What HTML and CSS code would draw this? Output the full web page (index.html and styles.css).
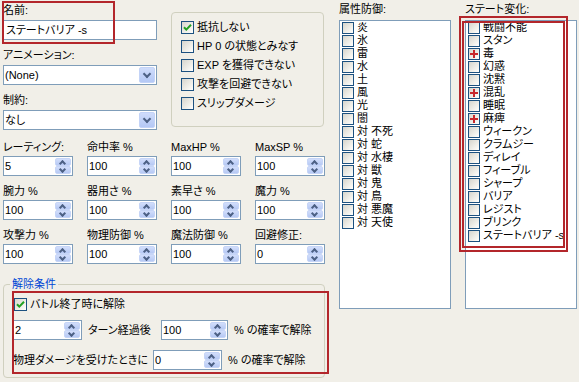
FILE: index.html
```html
<!DOCTYPE html>
<html lang="ja">
<head>
<meta charset="utf-8">
<link rel="stylesheet" href="styles.css">
</head>
<body>
<div class="page">
  <div class="left">
    <div class="top">
      <div class="col-a">
        <div class="field">
          <div class="lbl">名前:</div>
          <div class="text">ステートバリア -s</div>
          <div class="mark mark-name"></div>
        </div>
        <div class="field">
          <div class="lbl">アニメーション:</div>
          <div class="combo"><span>(None)</span><span class="drop"></span></div>
        </div>
        <div class="field">
          <div class="lbl">制約:</div>
          <div class="combo"><span>なし</span><span class="drop"></span></div>
        </div>
      </div>
      <div class="opts">
        <div class="opt"><span class="cb"><svg viewBox="0 0 11 11" width="11" height="11"><path d="M2 5.2 L4.3 7.6 L9 2.8" stroke="#21a121" stroke-width="2" fill="none"/></svg></span>抵抗しない</div>
        <div class="opt"><span class="cb"></span>HP 0 の状態とみなす</div>
        <div class="opt"><span class="cb"></span>EXP を獲得できない</div>
        <div class="opt"><span class="cb"></span>攻撃を回避できない</div>
        <div class="opt"><span class="cb"></span>スリップダメージ</div>
      </div>
    </div>

    <div class="grid">
      <div class="cell"><div class="lbl">レーティング:</div><div class="spin"><span class="v">5</span><span class="b"><span class="up"></span><span class="dn"></span></span></div></div>
      <div class="cell"><div class="lbl">命中率 %</div><div class="spin"><span class="v">100</span><span class="b"><span class="up"></span><span class="dn"></span></span></div></div>
      <div class="cell"><div class="lbl">MaxHP %</div><div class="spin"><span class="v">100</span><span class="b"><span class="up"></span><span class="dn"></span></span></div></div>
      <div class="cell"><div class="lbl">MaxSP %</div><div class="spin"><span class="v">100</span><span class="b"><span class="up"></span><span class="dn"></span></span></div></div>
      <div class="cell"><div class="lbl">腕力 %</div><div class="spin"><span class="v">100</span><span class="b"><span class="up"></span><span class="dn"></span></span></div></div>
      <div class="cell"><div class="lbl">器用さ %</div><div class="spin"><span class="v">100</span><span class="b"><span class="up"></span><span class="dn"></span></span></div></div>
      <div class="cell"><div class="lbl">素早さ %</div><div class="spin"><span class="v">100</span><span class="b"><span class="up"></span><span class="dn"></span></span></div></div>
      <div class="cell"><div class="lbl">魔力 %</div><div class="spin"><span class="v">100</span><span class="b"><span class="up"></span><span class="dn"></span></span></div></div>
      <div class="cell"><div class="lbl">攻撃力 %</div><div class="spin"><span class="v">100</span><span class="b"><span class="up"></span><span class="dn"></span></span></div></div>
      <div class="cell"><div class="lbl">物理防御 %</div><div class="spin"><span class="v">100</span><span class="b"><span class="up"></span><span class="dn"></span></span></div></div>
      <div class="cell"><div class="lbl">魔法防御 %</div><div class="spin"><span class="v">100</span><span class="b"><span class="up"></span><span class="dn"></span></span></div></div>
      <div class="cell"><div class="lbl">回避修正:</div><div class="spin"><span class="v">0</span><span class="b"><span class="up"></span><span class="dn"></span></span></div></div>
    </div>

    <div class="release-wrap">
      <fieldset class="release">
        <legend>解除条件</legend>
        <div class="rrow r1"><span class="cb"><svg viewBox="0 0 11 11" width="11" height="11"><path d="M2 5.2 L4.3 7.6 L9 2.8" stroke="#21a121" stroke-width="2" fill="none"/></svg></span>バトル終了時に解除</div>
        <div class="rrow r2">
          <div class="spin w69"><span class="v">2</span><span class="b"><span class="up"></span><span class="dn"></span></span></div>
          <span class="rl turn">ターン経過後</span>
          <div class="spin w67"><span class="v">100</span><span class="b"><span class="up"></span><span class="dn"></span></span></div>
          <span class="rl">% の確率で解除</span>
        </div>
        <div class="rrow r3">
          <span class="rl dmg">物理ダメージを受けたときに</span>
          <div class="spin w69"><span class="v">0</span><span class="b"><span class="up"></span><span class="dn"></span></span></div>
          <span class="rl">% の確率で解除</span>
        </div>
      </fieldset>
      <div class="mark mark-rel"></div>
    </div>
  </div>

  <div class="lists">
    <div class="lcol">
      <div class="lbl">属性防御:</div>
      <div class="list">
        <div class="item"><span class="cb sm"></span>炎</div>
        <div class="item"><span class="cb sm"></span>氷</div>
        <div class="item"><span class="cb sm"></span>雷</div>
        <div class="item"><span class="cb sm"></span>水</div>
        <div class="item"><span class="cb sm"></span>土</div>
        <div class="item"><span class="cb sm"></span>風</div>
        <div class="item"><span class="cb sm"></span>光</div>
        <div class="item"><span class="cb sm"></span>闇</div>
        <div class="item"><span class="cb sm"></span>対 不死</div>
        <div class="item"><span class="cb sm"></span>対 蛇</div>
        <div class="item"><span class="cb sm"></span>対 水棲</div>
        <div class="item"><span class="cb sm"></span>対 獣</div>
        <div class="item"><span class="cb sm"></span>対 鬼</div>
        <div class="item"><span class="cb sm"></span>対 鳥</div>
        <div class="item"><span class="cb sm"></span>対 悪魔</div>
        <div class="item"><span class="cb sm"></span>対 天使</div>
      </div>
    </div>
    <div class="lcol state">
      <div class="lbl">ステート変化:</div>
      <div class="list">
        <div class="item"><span class="cb sm"></span>戦闘不能</div>
        <div class="item"><span class="cb sm"></span>スタン</div>
        <div class="item"><span class="cb sm plus"></span>毒</div>
        <div class="item"><span class="cb sm"></span>幻惑</div>
        <div class="item"><span class="cb sm"></span>沈黙</div>
        <div class="item"><span class="cb sm plus"></span>混乱</div>
        <div class="item"><span class="cb sm"></span>睡眠</div>
        <div class="item"><span class="cb sm plus"></span>麻痺</div>
        <div class="item"><span class="cb sm"></span>ウィークン</div>
        <div class="item"><span class="cb sm"></span>クラムジー</div>
        <div class="item"><span class="cb sm"></span>ディレイ</div>
        <div class="item"><span class="cb sm"></span>フィーブル</div>
        <div class="item"><span class="cb sm"></span>シャープ</div>
        <div class="item"><span class="cb sm"></span>バリア</div>
        <div class="item"><span class="cb sm"></span>レジスト</div>
        <div class="item"><span class="cb sm"></span>ブリンク</div>
        <div class="item"><span class="cb sm"></span>ステートバリア -s</div>
      </div>
      <div class="mark mark-st1"></div>
      <div class="mark mark-st2"></div>
    </div>
  </div>
</div>
</body>
</html>
```

FILE: styles.css
```css
* { box-sizing: border-box; }
html, body { margin: 0; padding: 0; }
body {
  width: 579px;
  height: 382px;
  overflow: hidden;
  background: #f1efe8;
  color: #000;
  font: 11px/13px "Liberation Sans", "Noto Sans CJK JP", sans-serif;
  font-feature-settings: "palt";
}
.page { display: flex; padding-left: 3px; }
.left { width: 322px; }
.top { display: flex; gap: 14px; }

.col-a { width: 154px; padding-top: 4px; display: flex; flex-direction: column; gap: 9px; }
.field { display: flex; flex-direction: column; gap: 3px; position: relative; }
.lbl { height: 13px; white-space: nowrap; }

.text, .combo {
  height: 20px;
  border: 1px solid #7f9db9;
  background: #fff;
  display: flex;
  align-items: center;
  white-space: nowrap;
}
.text { padding-left: 2px; }
.combo { padding-left: 1px; justify-content: space-between; }
.drop {
  width: 16px; height: 16px;
  margin-right: 1px;
  border: 1px solid #c3d3f7;
  border-radius: 2px;
  background: linear-gradient(#cfdcfb, #b4c8f5);
  position: relative;
}
.drop::before {
  content: "";
  position: absolute;
  left: 4px; top: 3px;
  width: 4px; height: 4px;
  border-right: 2px solid #4d6185;
  border-bottom: 2px solid #4d6185;
  transform: rotate(45deg);
}

.opts {
  width: 153px;
  height: 115px;
  margin-top: 12px;
  border: 1px solid #d0d0bf;
  border-radius: 4px;
  padding: 5px 0 0 9px;
}
.opt { height: 19px; display: flex; align-items: center; gap: 3px; white-space: nowrap; }

.cb {
  flex: none;
  width: 13px; height: 13px;
  border: 1px solid #1c5180;
  background: linear-gradient(135deg, #d6d5cd, #f4f3ee 70%, #fff);
  display: flex; align-items: center; justify-content: center;
  position: relative;
}
.cb.sm { width: 12px; height: 12px; }
.cb.plus::before, .cb.plus::after {
  content: "";
  position: absolute;
  background: #c8282d;
}
.cb.plus::before { left: 1px; top: 4px; width: 8px; height: 2px; }
.cb.plus::after { left: 4px; top: 1px; width: 2px; height: 8px; }

.grid {
  display: grid;
  grid-template-columns: repeat(4, 70px);
  column-gap: 14px;
  row-gap: 9px;
  margin-top: 11px;
}
.cell { display: flex; flex-direction: column; gap: 2px; }

.spin {
  height: 20px;
  border: 1px solid #7f9db9;
  background: #fff;
  display: flex;
  flex: none;
}
.spin .v { flex: 1; padding-left: 1px; line-height: 18px; }
.spin .b { width: 16px; margin: 1px 1px 1px 0; display: flex; flex-direction: column; }
.spin .b span {
  flex: 1;
  position: relative;
  border: 1px solid #c6d5f7;
  border-radius: 2px;
  background: linear-gradient(#d2defb, #b6c9f4);
}
.spin .b span::before {
  content: "";
  position: absolute;
  left: 4px;
  width: 3px; height: 3px;
  border-left: 2px solid #4d6185;
  border-top: 2px solid #4d6185;
}
.spin .b .up::before { top: 2px; transform: rotate(45deg); }
.spin .b .dn::before { top: 0; transform: rotate(225deg); }
.w69 { width: 69px; }
.w67 { width: 67px; }

.release-wrap { position: relative; margin-top: 14px; }
.release {
  margin: 0;
  width: 322px;
  height: 100px;
  border: 1px solid #d0d0bf;
  border-radius: 4px;
  padding: 0 0 0 10px;
}
.release legend {
  margin-left: -4px;
  padding: 0 2px;
  color: #0046d5;
  line-height: 13px;
}
.rrow { display: flex; align-items: center; white-space: nowrap; }
.r1 { height: 17px; margin-top: 5px; gap: 3px; }
.r2 { height: 20px; margin-top: 7px; margin-left: -1px; gap: 6px; }
.r3 { height: 20px; margin-top: 10px; margin-left: -1px; gap: 6px; }
.turn { width: 67px; }
.dmg { width: 134px; }

.lists { display: flex; gap: 14px; margin-left: 14px; }
.lcol { width: 112px; padding-top: 3px; position: relative; }
.lcol .lbl { margin-bottom: 4px; }
.list {
  height: 289px;
  border: 1px solid #7f9db9;
  background: #fff;
  padding: 0 0 0 2px;
}
.item { height: 13px; display: flex; align-items: center; gap: 3px; white-space: nowrap; }

.mark { position: absolute; border: 2px solid #b3262b; pointer-events: none; }
.mark-name { left: -1px; top: -3px; width: 113px; height: 43px; }
.mark-st1 { left: -6px; top: 16px; width: 109px; height: 236px; }
.mark-st2 { left: -3px; top: 21px; width: 103px; height: 227px; }
.mark-rel { left: 9px; top: 13px; width: 317px; height: 83px; }
```
